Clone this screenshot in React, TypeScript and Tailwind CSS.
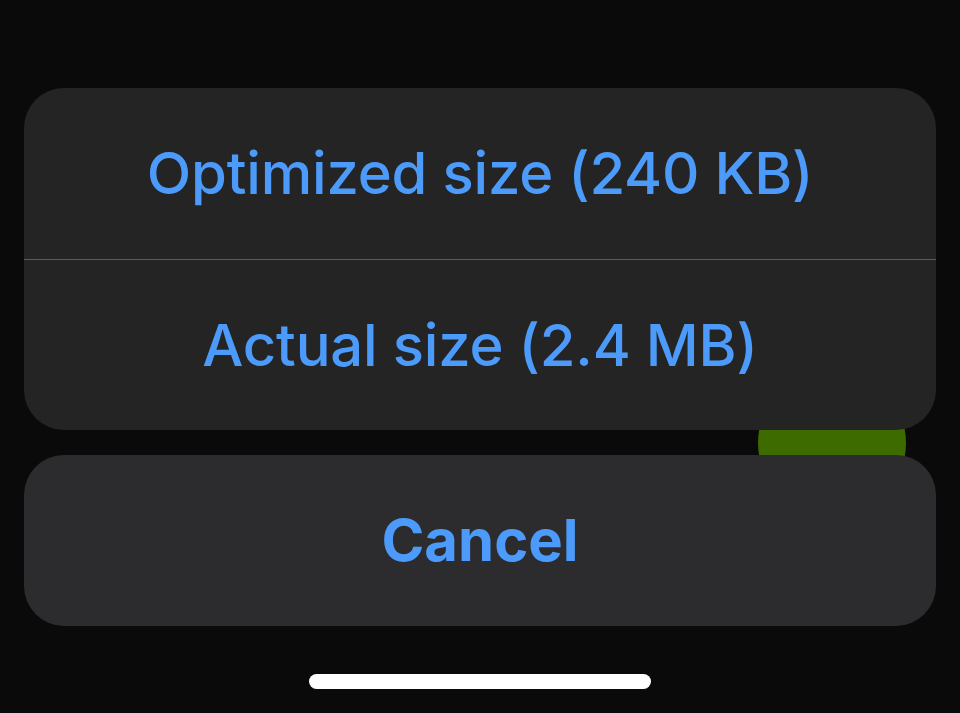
export default function App() {
  return (
    <div className="relative w-[960px] h-[713px] bg-[#0a0a0a] overflow-hidden" style={{ fontFamily: 'Inter, "Noto Sans", sans-serif' }}>
      <div className="absolute left-[758px] top-[369px] w-[148px] h-[148px] rounded-full bg-[#3e6b00]" />
      <div className="relative flex flex-col px-[24px] pt-[88px]">
        <div className="flex flex-col rounded-[40px] bg-[#242424] overflow-hidden">
          <div className="h-[171px] flex items-center justify-center text-[#4c9bfa] text-[58px] font-medium tracking-[-0.2px]">
            Optimized size (240 KB)
          </div>
          <div className="h-px bg-[#5c5c5c]" />
          <div className="h-[170px] flex items-center justify-center text-[#4c9bfa] text-[58px] font-medium tracking-[-0.2px]">
            Actual size (2.4 MB)
          </div>
        </div>
        <div className="mt-[25px] h-[171px] rounded-[40px] bg-[#2c2c2e] flex items-center justify-center text-[#4c9bfa] text-[58px] font-bold">
          Cancel
        </div>
        <div className="mt-[48px] mx-auto w-[342px] h-[15px] rounded-full bg-white" />
      </div>
    </div>
  );
}
